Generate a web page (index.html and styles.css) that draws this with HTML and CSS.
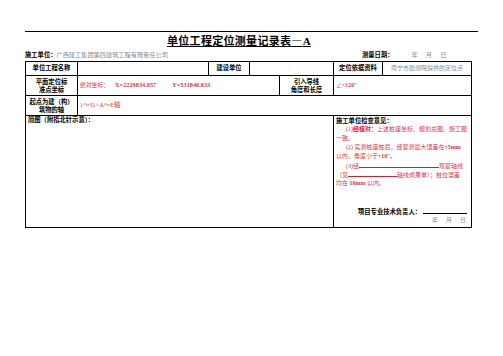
FILE: index.html
```html
<!DOCTYPE html>
<html lang="zh">
<head>
<meta charset="utf-8">
<link rel="stylesheet" href="styles.css">
</head>
<body>
<div class="page">
  <div class="topline"></div>
  <div class="title-row"><h1 class="title">单位工程定位测量记录表<span class="cjk">—</span>A</h1></div>
  <div class="meta">
    <div class="meta-left"><span class="lbl">施工单位：</span><span class="gray">广西建工集团第四建筑工程有限责任公司</span></div>
    <div class="meta-right"><span class="lbl">测量日期：</span><span class="gray date">年　月　日</span></div>
  </div>
  <table class="form">
    <colgroup>
      <col class="c0"><col class="c1"><col class="c2"><col class="c3"><col class="c4"><col class="c5"><col class="c6">
    </colgroup>
    <tr class="r1">
      <td class="lbl center">单位工程名称</td>
      <td></td>
      <td class="lbl center">建设单位</td>
      <td colspan="2"></td>
      <td class="lbl center">定位依据资料</td>
      <td class="gray center">南宁市勘测院提供的定位点</td>
    </tr>
    <tr class="r2">
      <td class="lbl center two">平面定位标<br>准点坐标</td>
      <td colspan="3" class="red val"><span class="coord-lbl">绝对坐标：</span><b class="num">X=2229834.057</b><b class="num gap">Y=531840.833</b></td>
      <td class="lbl center two">引入导线<br>角度和长度</td>
      <td colspan="2" class="red val">∠<b>&lt;±20″</b></td>
    </tr>
    <tr class="r3">
      <td class="lbl center two">起点为建（构）<br>筑物的轴</td>
      <td colspan="6" class="red val big">1～31×A～E轴</td>
    </tr>
    <tr class="r4">
      <td colspan="5" class="lbl top sketch">简图（附指北针示意）：</td>
      <td colspan="2" class="top opinion">
        <div class="lbl">施工单位检查意见：</div>
        <div class="red ind">(1)<b class="bred">经核对：</b>上述桩座坐标、规划总图、施工图</div>
        <div class="red">一致。</div>
        <div class="red ind">(2) 实测桩座桩后，经复测最大误差在±<b>5mm</b></div>
        <div class="red">以内，角度小于±<b>10</b>″。</div>
        <div class="red ind">(3)经<span class="blank b1"></span>现复轴线</div>
        <div class="red">（见<span class="blank b2"></span>轴线成果单）；桩位误差</div>
        <div class="red">均在 <b>10mm</b> 以内。</div>
        <div class="sign"><span class="lbl">项目专业技术负责人：</span><span class="sline"></span></div>
        <div class="gray sdate">年　月　日</div>
      </td>
    </tr>
  </table>
</div>
</body>
</html>
```

FILE: styles.css
```css
html, body {
  margin: 0;
  padding: 0;
  background: #fff;
}
body {
  font-family: "Liberation Serif", "Noto Sans CJK SC", serif;
  color: #000;
}
.page {
  padding: 31px 0 0 25px;
  width: 453px;
}
.topline {
  border-top: 1px solid #000;
  width: 453px;
}
.title-row {
  display: flex;
  padding-left: 142px;
  height: 17px;
}
.title {
  margin: 0;
  font-size: 11px;
  line-height: 16px;
  font-weight: bold;
  text-decoration: underline;
  text-underline-offset: 1px;
  letter-spacing: 0.3px;
}
.cjk {
  font-family: "Noto Sans CJK SC", sans-serif;
}
.meta {
  display: flex;
  height: 12px;
  align-items: center;
  font-size: 6px;
  line-height: 12px;
}
.meta-left {
  width: 337px;
}
.lbl {
  font-weight: bold;
  font-size: 6.3px;
}
.gray {
  color: #8a8a8a;
  font-weight: normal;
}
.meta .gray {
  font-size: 6.2px;
}
.date {
  margin-left: 18px;
  letter-spacing: 1px;
}
.form {
  border-collapse: collapse;
  table-layout: fixed;
  width: 447px;
  font-size: 6px;
}
.form td {
  border: 1px solid #000;
  padding: 0 2px;
  line-height: 8.5px;
  overflow: hidden;
  white-space: nowrap;
}
.form td.two {
  line-height: 8.5px;
  padding-top: 1px;
}
.c0 { width: 52px; }
.c1 { width: 131px; }
.c2 { width: 41px; }
.c3 { width: 30px; }
.c4 { width: 54px; }
.c5 { width: 49px; }
.c6 { width: 89px; }
.r1 td { height: 13px; }
.r2 td, .r3 td { height: 18px; }
.r4 td { height: 111px; }
.center { text-align: center; }
.top { vertical-align: top; }
.red { color: #e0343f; }
.val { padding-left: 3px; font-size: 5.8px; }
.val.big { font-size: 6.3px; }
.num { font-size: 6.3px; margin-left: 6px; }
.num.gap { margin-left: 16px; }
.bred { color: #f0101c; }
.sketch { padding-top: 2px; }
.opinion {
  padding: 1px 1px 0 2px;
  font-size: 6px;
}
.opinion div {
  line-height: 9px;
  height: 9px;
}
.ind { padding-left: 10px; }
.blank {
  display: inline-block;
  border-bottom: 1px solid #d0202a;
  height: 6px;
  vertical-align: baseline;
}
.b1 { width: 80px; }
.b2 { width: 49px; }
.opinion .sign {
  margin-top: 19px;
  padding-left: 22px;
}
.sline {
  display: inline-block;
  width: 44px;
  border-bottom: 1px solid #000;
  height: 6px;
  margin-left: 2px;
}
.opinion .sdate {
  text-align: right;
  padding-right: 2px;
  letter-spacing: 1px;
}
```
